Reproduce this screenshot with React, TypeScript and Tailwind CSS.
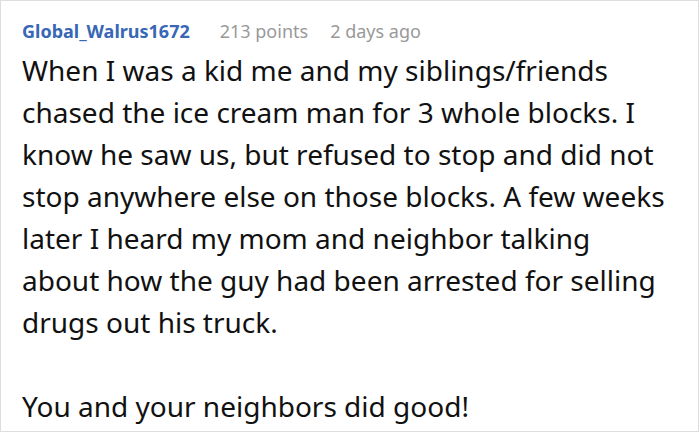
export default function App() {
  return (
    <div className="w-[700px] h-[433px] bg-white">
      <div className="w-[699px] h-[432px] border border-[#dddddd] pl-[21px] pr-[30px] pt-[18px]" style={{ fontFamily: '"Noto Sans", sans-serif' }}>
        <div className="flex items-baseline text-[18px] leading-[24px]">
          <span className="font-bold text-[#3867b5]">Global_Walrus1672</span>
          <span className="ml-[30px] text-[#999999]">213 points</span>
          <span className="ml-[22px] text-[#999999]">2 days ago</span>
        </div>
        <div className="mt-[6px] text-[28px] leading-[42px] text-[#111111]">
          <p>
            When I was a kid me and my siblings/friends chased the ice cream man for 3 whole blocks. I know he saw us, but refused to stop and did not stop anywhere else on those blocks. A few weeks later I heard my mom and neighbor talking about how the guy had been arrested for selling drugs out his truck.
          </p>
          <p className="mt-[42px]">You and your neighbors did good!</p>
        </div>
      </div>
    </div>
  );
}
